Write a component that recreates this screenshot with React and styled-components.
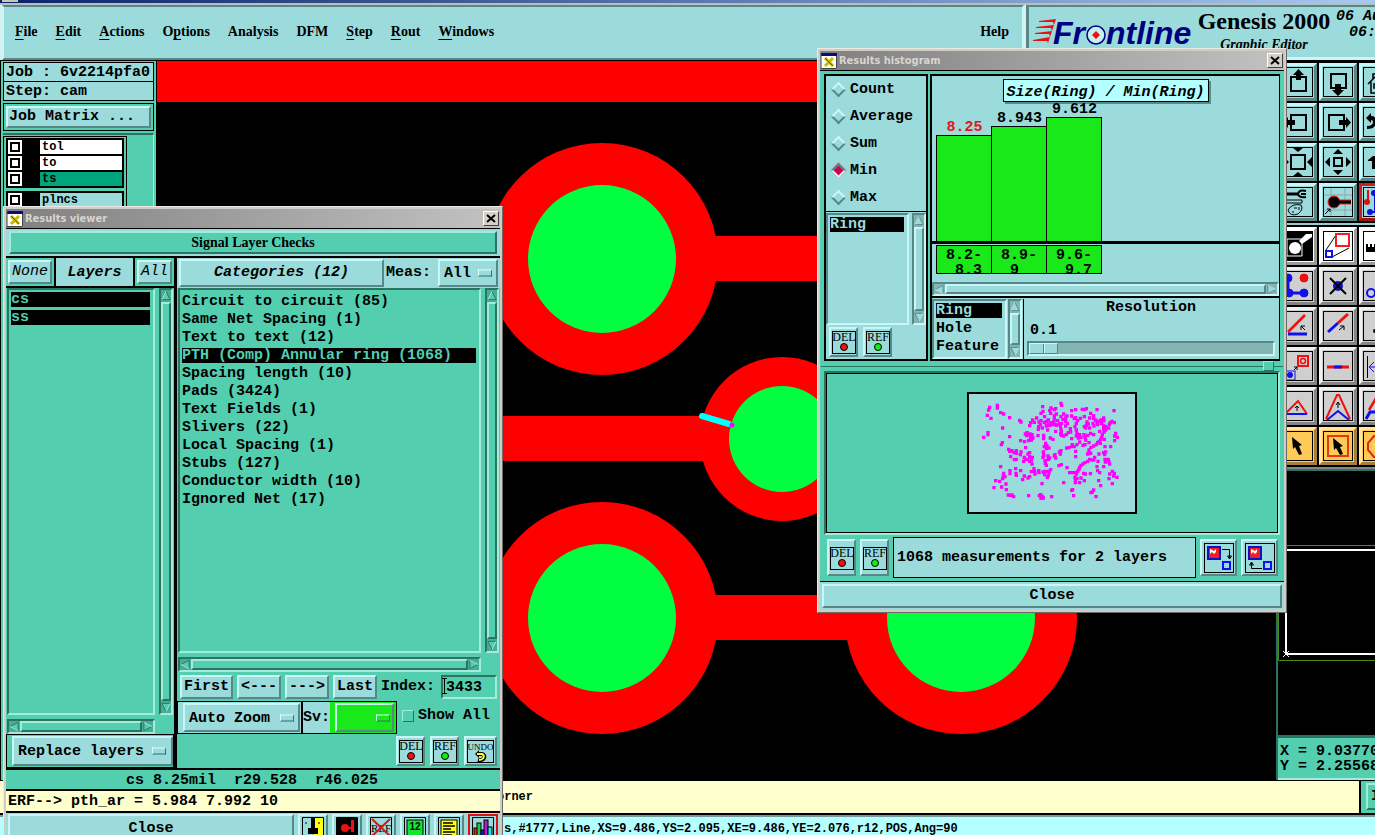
import React from 'react';
import styled, { createGlobalStyle, css } from 'styled-components';

const cyan = '#9bdbdb';
const cyanLight = '#c9f6f6';
const cyanDark = '#568888';
const teal = '#53cfb0';
const tealLight = '#a4ecda';
const tealDark = '#2b7462';
const green = '#19e819';
const cream = '#ffffce';

const mono = '"Liberation Mono", "Courier New", monospace';
const serif = '"Liberation Serif", "Times New Roman", serif';

const GlobalStyle = createGlobalStyle`
  * {
    box-sizing: border-box;
  }

  body {
    margin: 0;
    background: #000;
    color: #000;
    font: bold 15px/18px ${mono};
  }

  button, input, select {
    margin: 0;
    border-radius: 0;
    color: inherit;
    font: inherit;
  }

  svg {
    display: block;
  }
`;

// Motif style bevels
const cyanRaised = css`
  background: ${cyan};
  border: 2px solid;
  border-color: ${cyanLight} ${cyanDark} ${cyanDark} ${cyanLight};
`;

const tealRaised = css`
  background: ${teal};
  border: 2px solid;
  border-color: ${tealLight} ${tealDark} ${tealDark} ${tealLight};
`;

const sunken = css`
  border: 2px solid;
  border-color: ${(p) => (p.$cyan
    ? `${cyanDark} ${cyanLight} ${cyanLight} ${cyanDark}`
    : `${tealDark} ${tealLight} ${tealLight} ${tealDark}`)};
`;

/* ---------- application shell ---------- */

const Shell = styled.div`
  position: relative;
  display: flex;
  flex-direction: column;
  height: 100vh;
  overflow: hidden;
`;

const DesktopTitle = styled.div`
  flex: none;
  height: 5px;
  border-bottom: 2px solid #b9bfc0;
  background: linear-gradient(90deg, #0a246a, #a6caf0);

  &::before {
    content: '';
    display: block;
    width: 16px;
    height: 2px;
    margin-left: 2px;
    background: #c8c8b8;
  }
`;

const Header = styled.header`
  display: flex;
  flex: none;
  gap: 2px;
  height: 56px;
  padding-left: 2px;
  border-bottom: 1px solid #000;
  background: #d8f0f0;
`;

const MenuBar = styled.nav`
  display: flex;
  flex: 1;
  align-items: center;
  gap: 18px;
  padding: 0 13px 2px 11px;
  background: ${cyan};
  border: 2px solid;
  border-color: ${cyanDark} ${cyanLight} ${cyanDark} ${cyanLight};
`;

const MenuItem = styled.button`
  padding: 0;
  border: 0;
  background: none;
  font: bold 14px/18px ${serif};
  text-underline-offset: 3px;

  &:last-child {
    margin-left: auto;
  }
`;

const Brand = styled.div`
  display: flex;
  flex: none;
  gap: 4px;
  width: 349px;
  padding: 2px 0 0 3px;
  overflow: hidden;
  background: ${cyan};
  border-top: 2px solid ${cyanDark};
  border-left: 3px solid ${cyanDark};
  border-bottom: 3px solid ${cyanLight};
`;

const BrandTitle = styled.div`
  flex: none;
  width: 136px;
  font: bold 24px/24px ${serif};
  text-align: center;
  white-space: nowrap;

  small {
    display: block;
    font: italic bold 14px/24px ${serif};
  }
`;

const BrandDate = styled.div`
  font-style: italic;
  line-height: 16px;
  white-space: pre;
`;

const BrandTime = styled.div`
  padding-left: 13px;
`;

const Workspace = styled.div`
  display: grid;
  flex: 1;
  grid-template-columns: 156px minmax(0, 1fr) 99px;
  min-height: 0;
`;

const Sidebar = styled.aside`
  padding: 1px 2px 0 2px;
  border-left: 1px solid #000;
  background: ${teal};
`;

const JobLine = styled.div`
  height: 20px;
  margin-bottom: -1px;
  padding-left: 2px;
  border: 1px solid #000;
  background: ${cyan};
  line-height: 19px;
  white-space: pre;
`;

const MatrixFrame = styled.div`
  margin-top: 3px;
  padding: 2px;
  border: 1px solid #000;
`;

const MatrixButton = styled.button`
  ${cyanRaised}
  display: block;
  width: 100%;
  height: 22px;
  padding: 0 1px;
  line-height: 18px;
  text-align: left;
`;

const LayerArea = styled.div`
  display: flex;
  gap: 2px;
  margin-top: 2px;
  border-top: 2px solid ${tealDark};
  border-right: 1px solid ${tealLight};
`;

const LayerFrame = styled.div`
  display: flex;
  flex-direction: column;
  gap: 3px;
  width: 124px;
  margin-top: 1px;
  padding: 1px 2px;
  border: 1px solid #000;
  border-bottom: 0;
`;

const LayerGroup = styled.div`
  display: flex;
  flex-direction: column;
  gap: 2px;
  padding: 2px;
  background: #000;
`;

const LayerRow = styled.label`
  display: grid;
  grid-template-columns: 14px 1fr;
  gap: 18px;
  height: 14px;
  font-size: 12px;
  line-height: 14px;

  span {
    padding-left: 2px;
    background: ${(p) => p.$color};
  }

  input {
    appearance: none;
    width: 14px;
    height: 14px;
    border: 2px solid #fff;
    outline: 2px solid #000;
    outline-offset: -4px;
    background: #fff;
  }
`;

const Board = styled.svg`
  width: 100%;
  height: 100%;
`;

const RightPanel = styled.aside`
  display: flex;
  flex-direction: column;
  min-width: 0;
  overflow: hidden;
  border-left: 2px solid ${tealDark};
`;

const ToolGrid = styled.div`
  display: grid;
  flex: none;
  grid-template-columns: repeat(3, 38px);
  gap: 2px;
  padding: 2px 1px;
  background: #000;
  border-bottom: ${(p) => (p.$last ? '2px solid #8a8585' : '2px solid #9bcccc')};
`;

const toolTones = {
  cyan: [cyan, cyanLight, cyanDark],
  white: ['#fff', '#fff', '#9b9b9b'],
  gray: ['#cfcfcf', '#f0f0f0', '#858585'],
  orange: ['#ffca57', '#ffe6a8', '#a58035'],
  red: [cyan, '#cc2020', '#a01414'],
};

const Tool = styled.button`
  width: 38px;
  height: 38px;
  padding: 0;
  border: 3px solid;
  border-color: ${(p) => {
    const [, light, dark] = toolTones[p.$tone];
    return `${light} ${dark} ${dark} ${light}`;
  }};
  background: ${(p) => toolTones[p.$tone][0]};
`;

const Overview = styled.svg`
  flex: 1;
  width: 100%;
  min-height: 0;
  border-top: 2px solid ${tealDark};
`;

const Coordinates = styled.div`
  flex: none;
  height: 45px;
  padding: 6px 0 0 2px;
  border-top: 3px solid ${tealDark};
  border-bottom: 2px solid ${tealLight};
  background: ${teal};
  line-height: 15px;
  white-space: pre;
`;

const PromptRow = styled.div`
  display: flex;
  flex: none;
  gap: 2px;
  height: 35px;
  border-top: 1px solid #000;
  border-bottom: 2px solid #000;
  background: #000;
`;

const Prompt = styled.div`
  flex: 1;
  padding-left: 497px;
  background: ${cream};
  font-size: 12px;
  line-height: 32px;
`;

const PromptSide = styled.div`
  width: 14px;
  padding: 2px 0 2px 5px;
  overflow: hidden;
  background: ${teal};
`;

const PromptButton = styled.button`
  ${tealRaised}
  width: 30px;
  height: 27px;
  padding: 0 3px;
  text-align: left;
`;

const StatusRow = styled.div`
  flex: none;
  height: 20px;
  padding-left: 504px;
  border-top: 2px solid #789a9a;
  background: #b4ffff;
  font-size: 12px;
  line-height: 24px;
  overflow: hidden;
  white-space: nowrap;
`;

/* ---------- dialogs ---------- */

const Dialog = styled.section`
  position: absolute;
  display: flex;
  flex-direction: column;
  padding: 2px;
  border: 1px solid;
  border-color: #ece9e2 #6b6b6b #6b6b6b #ece9e2;
  background: #d0ccc6;
`;

const ViewerDialog = styled(Dialog)`
  top: 206px;
  bottom: -12px;
  left: 3px;
  width: 500px;
`;

const HistogramDialog = styled(Dialog)`
  top: 48px;
  left: 817px;
  width: 470px;
`;

const TitleBar = styled.header`
  display: flex;
  flex: none;
  align-items: center;
  gap: 2px;
  height: 19px;
  padding: 0 1px;
  background: linear-gradient(90deg, #808080, #c2c2c2);
  color: #d8d5ce;
  font: bold 11px/16px "DejaVu Sans Condensed", "DejaVu Sans", sans-serif;

  h2 {
    flex: 1;
    margin: 0;
    font: inherit;
  }
`;

const CloseBox = styled.button`
  width: 16px;
  height: 15px;
  padding: 2px;
  border: 1px solid;
  border-color: #fff #404040 #404040 #fff;
  background: #d4d0c8;
`;

const Body = styled.div`
  display: flex;
  flex: 1;
  flex-direction: column;
  min-height: 0;
  border: 1px solid #000;
  border-width: 1px 0 0;
  background: #000;
`;

const Banner = styled.div`
  flex: none;
  margin-bottom: 2px;
  padding: 2px 3px;
  background: ${cyan};

  h3 {
    ${tealRaised}
    height: 23px;
    margin: 0;
    font: bold 14px/19px ${serif};
    text-align: center;
  }
`;

const Columns = styled.div`
  display: grid;
  flex: 1;
  grid-template-columns: 168px minmax(0, 1fr);
  gap: 3px;
  min-height: 0;
`;

const Column = styled.div`
  display: flex;
  flex-direction: column;
  min-height: 0;
  background: ${teal};
`;

const ColumnHead = styled.div`
  display: flex;
  flex: none;
  gap: 2px;
  height: 30px;
  border-bottom: 2px solid #000;
  background: #000;
`;

const HeadCell = styled.div`
  padding: 2px;
  background: ${teal};
`;

const HeadLabel = styled.div`
  flex: 1;
  background: ${cyan};
  font-style: italic;
  line-height: 30px;
  text-align: center;
`;

const Button = styled.button`
  ${cyanRaised}
  height: ${(p) => p.$height || 24}px;
  width: ${(p) => (p.$wide ? '100%' : 'auto')};
  padding: 0 2px;
  font-style: ${(p) => (p.$italic ? 'italic' : 'normal')};
  font-weight: ${(p) => (p.$light ? 'normal' : 'bold')};
  line-height: 20px;
`;

const CategoryHead = styled.div`
  display: flex;
  flex: none;
  align-items: center;
  height: 30px;
  padding: 0 2px;
  background: ${cyan};

  label {
    padding: 0 7px 0 2px;
  }
`;

const CategoryButton = styled(Button)`
  flex: 1;
`;

const SelectWrap = styled.span`
  position: relative;
  display: block;

  &::after {
    content: '';
    position: absolute;
    top: 50%;
    right: 6px;
    width: 12px;
    height: 5px;
    border: 1px solid;
    border-color: #d9ffff #337070 #337070 #d9ffff;
    transform: translateY(-50%);
    pointer-events: none;
  }
`;

const Select = styled.select`
  ${cyanRaised}
  display: block;
  appearance: none;
  width: ${(p) => p.$width}px;
  height: ${(p) => p.$height}px;
  padding: 2px 4px 0;
  background: ${(p) => p.$color || cyan};
`;

const ListArea = styled.div`
  display: grid;
  flex: 1;
  grid-template-columns: minmax(0, 1fr) 14px;
  grid-template-rows: minmax(0, 1fr) 15px;
  gap: 4px;
  min-height: 0;
  padding: 0 1px;
`;

const List = styled.ul`
  ${sunken}
  display: flex;
  flex-direction: column;
  gap: 3px;
  margin: 0;
  padding: ${(p) => (p.$roomy ? 4 : 2)}px 3px 0 2px;
  overflow: hidden;
  list-style: none;
  background: ${(p) => (p.$cyan ? cyan : 'transparent')};
`;

const ListItem = styled.li`
  flex: none;
  height: 15px;
  background: ${(p) => (p.$selected ? '#000' : 'transparent')};
  color: ${(p) => (p.$selected ? (p.$cyan ? cyan : teal) : '#000')};
  line-height: 16px;
  white-space: nowrap;
`;

const ScrollTrack = styled.div`
  ${sunken}
  display: flex;
  flex-direction: ${(p) => (p.$horizontal ? 'row' : 'column')};
  gap: 1px;
  min-width: 0;
  min-height: 0;
  background: ${(p) => (p.$cyan ? '#84b5b5' : '#46ae94')};
`;

const ScrollThumb = styled.div`
  flex: 1;
  ${(p) => (p.$cyan ? cyanRaised : tealRaised)}
`;

const NavRow = styled.div`
  display: flex;
  flex: none;
  align-items: center;
  gap: 4px;
  padding: 3px 3px 2px;
`;

const IndexField = styled.div`
  position: relative;
  flex: 1;
  margin-left: 2px;

  svg {
    position: absolute;
    top: 3px;
    left: 1px;
  }
`;

const IndexInput = styled.input`
  ${sunken}
  display: block;
  width: 100%;
  height: 24px;
  padding: 0 3px;
  background: transparent;
`;

const ViewRow = styled.div`
  display: flex;
  flex: none;
  gap: 5px;
`;

const ViewFrame = styled.div`
  display: flex;
  align-items: center;
  height: 33px;
  border: 1px solid #000;
  background: ${cyan};
`;

const ZoomCell = styled.div`
  padding: 1px 1px 1px 5px;
  border-right: 2px solid #000;
`;

const SvCell = styled.div`
  display: flex;
  align-items: center;

  > span {
    padding: 1px 2px 1px 5px;
    background: ${green};
  }
`;

const ShowAll = styled.label`
  display: flex;
  align-items: center;
  gap: 4px;
  height: 30px;

  input {
    ${tealRaised}
    appearance: none;
    width: 12px;
    height: 12px;
    border-width: 1px;
  }
`;

const IconRow = styled.div`
  display: flex;
  flex: none;
  justify-content: ${(p) => (p.$left ? 'flex-start' : 'flex-end')};
  gap: 5px;
  padding: 2px 3px;
`;

const IconButton = styled.button`
  ${cyanRaised}
  display: flex;
  flex: none;
  align-items: center;
  justify-content: center;
  width: ${(p) => p.$width || 29}px;
  height: ${(p) => p.$height || 30}px;
  padding: 0;
`;

const ReplaceFrame = styled.div`
  flex: none;
  padding: 1px 1px 1px 5px;
  border: 1px solid #000;
`;

const Measure = styled.div`
  flex: none;
  height: 23px;
  border: 2px solid #000;
  border-width: 2px 0;
  padding-left: 120px;
  background: ${teal};
  line-height: 21px;
  white-space: pre;
`;

const Erf = styled.div`
  flex: none;
  height: 22px;
  padding-left: 2px;
  border-bottom: 2px solid #000;
  background: ${cream};
  line-height: 21px;
  white-space: pre;
`;

const ViewerFoot = styled.footer`
  display: flex;
  flex: none;
  gap: 4px;
  height: 31px;
  padding: 1px 2px;
  background: ${cyan};
`;

const FootClose = styled(Button)`
  flex: 1;
  height: 29px;
`;

const FootTool = styled.button`
  ${cyanRaised}
  width: 30px;
  height: 29px;
  padding: 0;
  border-color: ${(p) => (p.$active ? '#e01010' : undefined)};
`;

/* ---------- histogram dialog ---------- */

const HistogramBody = styled.div`
  border: 1px solid #000;
  border-width: 1px 0;
  padding: 3px 4px;
  background: ${teal};
`;

const HistogramTop = styled.div`
  display: grid;
  grid-template-columns: 104px minmax(0, 1fr);
  gap: 2px;
`;

const Pane = styled.div`
  display: flex;
  flex-direction: column;
  border: 2px solid #000;
  border-right-width: ${(p) => (p.$side ? 2 : 1)}px;
  background: ${cyan};
`;

const RadioGroup = styled.div`
  display: flex;
  flex-direction: column;
  padding-left: 7px;
  border-bottom: 1px solid #000;
`;

const Radio = styled.label`
  display: flex;
  align-items: center;
  gap: 6px;
  height: 27px;

  input {
    appearance: none;
    width: 11px;
    height: 11px;
    border: 2px solid;
    border-color: ${cyanLight} ${cyanDark} ${cyanDark} ${cyanLight};
    transform: rotate(45deg);
  }

  input:checked {
    border-color: ${cyanDark} ${cyanLight} ${cyanLight} ${cyanDark};
    background: #c8084c;
  }
`;

const SideLists = styled.div`
  display: grid;
  flex: 1;
  grid-template-columns: minmax(0, 1fr) 14px;
  gap: 3px;
  margin-top: 1px;
`;

const Chart = styled.div`
  position: relative;
  display: flex;
  align-items: flex-end;
  height: 168px;
  padding-left: 5px;
  border-bottom: 3px solid #000;
`;

const ChartTitle = styled.div`
  position: absolute;
  top: 3px;
  left: 50%;
  height: 23px;
  padding: 0 3px;
  border: 1px solid #000;
  background: #b4ffff;
  box-shadow: 2px 2px 0 #5c8a8a;
  font-style: italic;
  line-height: 25px;
  white-space: nowrap;
  transform: translateX(-50%);
`;

const BarColumn = styled.div`
  position: relative;
  width: 55px;
  color: ${(p) => (p.$hot ? '#e01818' : '#000')};
  line-height: 15px;
  text-align: center;
`;

const Bar = styled.div`
  border: 1px solid #000;
  border-width: 1px 1px 0 0;
  background: ${green};
  box-shadow: -1px 0 0 #000;
`;

const Ranges = styled.div`
  display: flex;
  padding: 1px 0 8px 5px;
`;

const Range = styled.div`
  width: 55px;
  height: 29px;
  padding: 2px 0 0 9px;
  border: 1px solid #000;
  border-left-width: 0;
  background: ${green};
  box-shadow: -1px 0 0 #000;
  line-height: 15px;
  white-space: pre;
`;

const HBar = styled.div`
  display: grid;
  height: 14px;
`;

const Settings = styled.div`
  display: grid;
  grid-template-columns: 75px 14px minmax(0, 1fr);
  gap: 1px;
  height: 63px;
  padding-top: 1px;
  border-top: 2px solid #000;
`;

const Resolution = styled.div`
  display: flex;
  flex-direction: column;
  padding: 0 4px 2px 3px;
  border-left: 1px solid #000;

  label {
    text-align: center;
  }

  output {
    padding: 5px 3px 1px;
  }
`;

const Slider = styled.input`
  ${sunken}
  appearance: none;
  width: 100%;
  height: 15px;
  background: #84b5b5;

  &::-webkit-slider-thumb {
    appearance: none;
    width: 29px;
    height: 11px;
    border: 1px solid;
    border-color: ${cyanLight} ${cyanDark} ${cyanDark} ${cyanLight};
    background: linear-gradient(90deg, transparent 13px, ${cyanDark} 13px 14px, ${cyanLight} 14px 15px, transparent 15px) ${cyan};
  }
`;

const Sash = styled.div`
  display: flex;
  align-items: center;
  justify-content: flex-end;
  height: 10px;
  margin: 0 -3px;
  padding-right: 9px;
  background: linear-gradient(${tealDark}, ${tealDark}) 0 5px / 100% 1px no-repeat;

  &::after {
    content: '';
    width: 9px;
    height: 8px;
    ${tealRaised}
    border-width: 1px;
  }
`;

const MapPane = styled.div`
  ${sunken}
  display: flex;
  justify-content: center;
  padding: 19px 0;
  outline: 1px solid #000;
  outline-offset: -3px;
`;

const MapBox = styled.div`
  width: 170px;
  height: 122px;
  border: 2px solid #000;
  background: ${cyan};
`;

const HistogramFoot = styled.div`
  display: flex;
  align-items: center;
  gap: 4px;
  padding: 2px 2px 0 3px;
`;

const Message = styled.div`
  flex: 1;
  padding-left: 3px;
  border: 1px solid #000;
  background: ${cyan};
  line-height: 39px;
`;

const CloseStrip = styled.div`
  padding: 2px;
  background: ${cyan};
`;

/* ---------- drawings ---------- */

const XIcon = () => (
  <svg width="16" height="16" viewBox="0 0 16 16">
    <rect width="16" height="16" fill="#fff" />
    <rect width="16" height="3" fill="#0a0a78" />
    <path d="M4 5 L12 13 M12 5 L4 13" stroke="#c8b800" strokeWidth="3" />
    <path d="M4 5 L12 13" stroke="#5c5c10" strokeWidth="1" />
    <path d="M0 0 V15.5 H15.5 V3" stroke="#444" fill="none" />
  </svg>
);

const CrossIcon = () => (
  <svg width="10" height="9" viewBox="0 0 10 9">
    <path d="M1 1 L9 8 M9 1 L1 8" stroke="#000" strokeWidth="2" />
  </svg>
);

const Arrow = ({ dir, light, dark }) => {
  const turn = { up: 0, right: 90, down: 180, left: 270 }[dir];
  return (
    <svg width="10" height="11" viewBox="0 0 11 11" style={{ flex: 'none' }}>
      <g transform={`rotate(${turn} 5.5 5.5)`}>
        <path d="M5.5 1 L10 10 H1 Z" fill={light} stroke={dark} />
        <path d="M5.5 1 L1 10" stroke="#c9f6f6" />
      </g>
    </svg>
  );
};

const Scrollbar = ({ horizontal, cyan: onCyan }) => {
  const fill = onCyan ? cyan : teal;
  const edge = onCyan ? cyanDark : tealDark;
  return (
    <ScrollTrack $horizontal={horizontal} $cyan={onCyan}>
      <Arrow dir={horizontal ? 'left' : 'up'} light={fill} dark={edge} />
      <ScrollThumb $cyan={onCyan} />
      <Arrow dir={horizontal ? 'right' : 'down'} light={fill} dark={edge} />
    </ScrollTrack>
  );
};

const FrontlineLogo = () => (
  <svg width="160" height="48" viewBox="0 0 160 48" style={{ flex: 'none' }}>
    <path
      fill="#ee1010"
      d="M7 12 L24 10 L22 16 L21 13 L7 13 Z M4 18 L22 16 L20 22 L19 19 L4 19 Z M3 24 L20 22 L18 28 L17 25 L3 25 Z M1 31 L18 28 L16 34 L15 32 L1 32 Z"
    />
    <g fill="#000080" fontFamily="Liberation Sans, Arial, sans-serif" fontSize="32" fontWeight="bold" fontStyle="italic">
      <text x="21" y="35">Fr</text>
      <text x="74" y="35">ntline</text>
    </g>
    <circle cx="64" cy="26" r="9" fill="#c8f0f0" stroke="#000080" strokeWidth="1.5" />
    <path d="M64 22 L68 26 L64 30 L60 26 Z" fill="#ee1010" />
  </svg>
);

const StampIcon = ({ text, size = 12, width = 24, children }) => (
  <svg width={width} height="24" viewBox={`0 0 ${width} 24`}>
    <rect x="0.5" y="1.5" width={width - 1} height="22" fill="none" stroke="#000" />
    <text x={width / 2} y="11" textAnchor="middle" fontFamily="Liberation Serif, serif" fontSize={size} fontWeight="normal">{text}</text>
    {children}
  </svg>
);

const DelIcon = () => (
  <StampIcon text="DEL">
    <circle cx="12" cy="17" r="3.5" fill="#f01010" stroke="#000" />
  </StampIcon>
);

const RefIcon = () => (
  <StampIcon text="REF">
    <circle cx="12" cy="17" r="3.5" fill="#10f010" stroke="#000" />
  </StampIcon>
);

const UndoIcon = () => (
  <StampIcon text="UNDO" size={9} width={27}>
    <path d="M12 15 H15 Q18 16 17 19 Q15 22 11 21" fill="none" stroke="#000" strokeWidth="4" />
    <path d="M8 15 L12 11 V19 Z" fill="#000" />
    <path d="M10 15 H15 Q17.500 16 16.500 19 Q15 21 12 21" fill="none" stroke="#ffff20" strokeWidth="2" />
  </StampIcon>
);

const CopyIcon = ({ back }) => (
  <svg width="30" height="30" viewBox="0 0 30 30">
    <rect x="0.5" y="0.5" width="29" height="29" fill="none" stroke="#000" />
    <rect x="4" y="4" width="12" height="12" fill="#f02020" stroke="#1010c8" strokeWidth="2" />
    <path d="M6 6 V11 L8 9 L10 11 L12 9 V6 L10 8 Z" fill="#fff" />
    <rect x="19" y="19" width="7" height="7" fill="#9bdbdb" stroke="#1010f0" strokeWidth="2" />
    <path
      d={back ? 'M17 25.500 H6.500 V20 M4.500 22 L6.500 19 L8.500 22 Z' : 'M18 6.500 H25.500 V15 M23.500 13 L25.500 16 L27.500 13 Z'}
      fill="none"
      stroke="#000"
    />
  </svg>
);

const toolDrawings = {
  panUp: <><rect x="9" y="11" width="15" height="14" fill="none" stroke="#000" strokeWidth="2" /><path d="M16.500 3 L22 9 H19 V14 H14 V9 H11 Z" /></>,
  panDown: <><rect x="9" y="8" width="15" height="14" fill="none" stroke="#000" strokeWidth="2" /><path d="M16 30 L22 24 H19 V18 H13 V24 H10 Z" /></>,
  home: <path d="M6 18 L16 8 L27 18 M9 16 V27 H26 M12 18 H16 V22 H12 Z M11 13 V8 H15" fill="none" stroke="#000" strokeWidth="1.500" />,
  panLeft: <><rect x="9" y="9" width="15" height="15" fill="none" stroke="#000" strokeWidth="2" /><path d="M1 16 L6 11 V14 H13 V19 H6 V22 Z" /></>,
  panRight: <><rect x="7" y="9" width="15" height="15" fill="none" stroke="#000" strokeWidth="2" /><path d="M29 16.500 L24 11 V14 H17 V19 H24 V22 Z" /></>,
  back: <path d="M4 12 L9 7 V10 Q15 10 14 17 Q13 23 5 23 V20 Q11 20 11 16 Q11 14 9 14 V17 Z" />,
  zoomIn: <><rect x="9" y="9" width="14" height="14" fill="none" stroke="#000" strokeWidth="2" /><path d="M11 2 H21 L16 6 Z M11 30 H21 L16 26 Z M30 11 V21 L25 16 Z M2 11 V21 L7 16 Z" /></>,
  zoomOut: <><rect x="12" y="12" width="8" height="8" fill="none" stroke="#000" strokeWidth="2" /><path d="M11 8 H21 L16 3 Z M11 24 H21 L16 29 Z M24 11 V21 L29 16 Z M8 11 V21 L3 16 Z" /></>,
  one: <path d="M6 14 L11 10 H13 V23 H10 V15 H6 Z" />,
  setup: (
    <g fill="none" stroke="#000">
      <path d="M1 8 H16" strokeWidth="3" />
      <path d="M24 5 Q17 3 16 8 Q17 12 24 11 M19 8 H24" strokeWidth="2" />
      <path d="M1 14 H20 V17 H1 M6 24 Q10 17 19 19 Q22 23 16 28 Q8 31 6 24 Z M12 22 H15 M10 26 H12 M17 21 V24" />
    </g>
  ),
  feature: (
    <>
      <path d="M9 1 V31 M23 1 V31 M1 9 H31 M1 24 H31" stroke="#88a9a9" />
      <path d="M13 16 H29" stroke="#f02020" strokeWidth="5" />
      <circle cx="12" cy="16" r="6" stroke="#f02020" />
      <path d="M13 16 H29" stroke="#000" strokeWidth="3" />
      <path d="M3 28 L8 23 M5 23 H8 V26" stroke="#000" fill="none" />
    </>
  ),
  net: <><path d="M6 4 V16" stroke="#e01010" strokeWidth="2" /><circle cx="5" cy="16" r="3" fill="#e01010" /><path d="M13 4 V26 H8" stroke="#1010e0" strokeWidth="2" fill="none" /><circle cx="12" cy="7" r="3" fill="#1010e0" /><circle cx="8" cy="26" r="3" fill="#1010e0" /></>,
  highlight: <><rect x="2" y="2" width="28" height="28" /><path d="M5 9 H20 V26 H5 Z" fill="none" stroke="#fff" /><path d="M17 11 L24 4 H30 V7 L20 14 Z" fill="#fff" /><circle cx="13" cy="18" r="6" fill="#fff" /></>,
  resize: <><path d="M4 20 L14 5 M10 27 L27 18" stroke="#000" /><rect x="14" y="4" width="13" height="12" fill="#fff" stroke="#f02020" strokeWidth="2" /><rect x="4" y="21" width="6" height="6" fill="#fff" stroke="#1010e8" strokeWidth="2" /></>,
  ruler: <path d="M4 22 V14 H6 V17 H8 V14 H10 V17 H12 V14 H14 V17 H18 V22 Z" />,
  nodes: <g fill="#1010e8" stroke="#1010e8"><path d="M6 8 V23 H22" strokeWidth="3" fill="none" /><circle cx="6" cy="8" r="4" /><circle cx="7" cy="23" r="4" /><circle cx="22" cy="23" r="4" /><circle cx="22" cy="8" r="4" fill="#f01010" stroke="#f01010" /></g>,
  remove: <><circle cx="16" cy="16" r="5" fill="#1010d8" /><path d="M8 8 L24 24 M24 8 L8 24" stroke="#000" strokeWidth="2" /></>,
  ringTool: <circle cx="9" cy="23" r="4" fill="none" stroke="#1010e8" strokeWidth="2" />,
  angle: <><path d="M6 22 L23 5" stroke="#f01010" strokeWidth="2.500" /><path d="M6 24 H25" stroke="#1010e8" strokeWidth="3" /><path d="M23 20 L19 16 M19 20 V16 H23" stroke="#000" fill="none" /></>,
  split: <><path d="M16 13 L26 4" stroke="#f01010" strokeWidth="3" /><path d="M6 22 L16 13" stroke="#1010e8" strokeWidth="3" /><path d="M17 20 L22 16 M18 16 H22 V20" stroke="#000" fill="none" /></>,
  dot: <circle cx="13" cy="21" r="2" />,
  moveTo: <><rect x="16" y="6" width="10" height="10" fill="none" stroke="#f01010" strokeWidth="2" /><circle cx="21" cy="11" r="2.500" fill="none" stroke="#f01010" strokeWidth="1.500" /><rect x="4" y="21" width="9" height="9" fill="none" stroke="#1010e8" /><circle cx="8" cy="25" r="3" fill="#1010e8" /><path d="M12 20 L15 17 M12 17 H15 V20" stroke="#000" fill="none" /></>,
  segment: <><path d="M5 17 H27" stroke="#f01010" strokeWidth="3" /><path d="M12 17 H20" stroke="#1010e8" strokeWidth="3" /></>,
  measure: <><path d="M5.500 6 V28" stroke="#000" /><path d="M7 17 H18 M12 12 L7 17 L12 22 M14 12 V22" stroke="#1010e8" fill="none" /></>,
  triangle: <><path d="M4 23 L16 11 L25 24" stroke="#f01010" strokeWidth="2" fill="none" /><path d="M4 24 H25" stroke="#1010e8" strokeWidth="2" /><path d="M15 21 V16 M13 18 L15 16 L17 18" stroke="#000" fill="none" /></>,
  peak: <><path d="M4 29 L15 5 L17 5 L28 29" stroke="#f01010" strokeWidth="2" fill="none" /><path d="M5 30 L16 21 L27 30" stroke="#1010e8" strokeWidth="2" fill="none" /><path d="M16 18 V13 M14 15 L16 12 L18 15" stroke="#000" fill="none" /></>,
  slope: <><path d="M7 20 L16 5" stroke="#f01010" strokeWidth="2.500" /><path d="M4 29 L8 22 H20" stroke="#1010e8" strokeWidth="3" fill="none" /></>,
  pick: <path d="M10 7 L11 19 L13 17 L17 25 L20 24 L17 16 L20 15 Z" />,
  pickBox: <><rect x="6" y="6" width="20" height="20" fill="none" stroke="#e83810" strokeWidth="2" /><path d="M11 8 L12 20 L14 18 L18 25 L21 24 L18 17 L21 16 Z" /></>,
  pickPoly: <><path d="M18 6 H12 L6 13 V20 L12 27 H20" fill="none" stroke="#e82010" strokeWidth="2" /><path d="M13 9 L14 19 L19 16 Z" /></>,
};

const topTools = ['panUp', 'panDown', 'home', 'panLeft', 'panRight', 'back', 'zoomIn', 'zoomOut', 'one', 'setup', 'feature', 'net'];
const editTools = [
  ['highlight', 'white'], ['resize', 'white'], ['ruler', 'white'],
  ['nodes', 'gray'], ['remove', 'gray'], ['ringTool', 'gray'],
  ['angle', 'gray'], ['split', 'gray'], ['dot', 'gray'],
  ['moveTo', 'gray'], ['segment', 'gray'], ['measure', 'gray'],
  ['triangle', 'gray'], ['peak', 'gray'], ['slope', 'gray'],
  ['pick', 'orange'], ['pickBox', 'orange'], ['pickPoly', 'orange'],
];

const ToolButton = ({ name, tone }) => (
  <Tool $tone={tone} aria-label={name}>
    <svg width="32" height="32" viewBox="0 0 32 32">
      {toolDrawings[name]}
      <rect x="1.500" y="1.500" width="29" height="29" fill="none" stroke="#000" />
    </svg>
  </Tool>
);

const footDrawings = {
  split: <><rect x="3" y="2" width="11" height="23" fill="#9bdbdb" /><rect x="14" y="2" width="9" height="23" fill="#ffff10" /><path d="M11 2 H15 V12 H18 V18 H8 V12 H11 Z" /><path d="M6 6 V8 M19 6 V8" stroke="#000" /></>,
  record: <><rect x="3" y="2" width="20" height="23" /><circle cx="11" cy="12" r="4" fill="#f01010" /><rect x="17" y="4" width="3" height="12" fill="#f01010" /><rect x="11" y="11" width="7" height="2" fill="#f01010" /></>,
  noRef: <><text x="13" y="16" textAnchor="middle" fontFamily="Liberation Serif, serif" fontSize="11" fontWeight="normal">REF</text><path d="M4 3 L22 20 M22 3 L4 20" stroke="#d01818" strokeWidth="2" /></>,
  half: <><rect x="5" y="4" width="16" height="20" fill="#10e830" stroke="#000" /><text x="13" y="14" textAnchor="middle" fontFamily="Liberation Sans, sans-serif" fontSize="10">12</text></>,
  notes: <><rect x="5" y="4" width="16" height="20" fill="#ffff10" stroke="#000" /><path d="M7 7 H17 M7 10 H19 M7 13 H15 M7 16 H19 M7 19 H16" stroke="#000" strokeWidth="1.500" /></>,
  bars: <g stroke="#000"><rect x="4" y="12" width="4" height="14" fill="#f02020" /><rect x="7" y="7" width="4" height="19" fill="#20c840" /><rect x="11" y="14" width="4" height="12" fill="#2020e0" /><rect x="14" y="4" width="4" height="22" fill="#b020c8" /><rect x="18" y="11" width="4" height="15" fill="#20e0f0" /></g>,
};

// Measurement locations, x and y on a 504 x 360 board
const points = `88 66 85 74 111 60 111 68 81 90 92 99 121 82 130 86 148 97 178 105 182 110 127 128
  70 156 83 142 83 148 148 154 181 166 126 172 123 178 193 169 196 187 145 192 148 198 155 196 161 202
  151 214 168 196 168 204 162 223 168 222 182 200 180 208 192 216 190 228 195 222 203 206 208 202 202 222
  208 214 213 224 208 228 215 236 216 216 121 244 166 250 149 256 149 265 167 264 168 270 181 256 130 264
  129 272 127 280 134 274 118 288 106 286 101 307 124 305 137 296 138 313 144 329 150 330 155 329 160 334
  187 283 192 272 203 278 208 274 205 331 213 259 221 250 223 258 224 266 235 256 236 262 245 295 237 331
  241 328 242 339 246 333 249 338 248 260 254 258 253 268 263 258 264 270 261 276 274 334 266 262 271 253
  247 64 242 84 248 78 253 94 229 98 217 104 222 111 211 112 208 121 236 110 242 106 240 118 235 124
  234 132 246 128 252 112 258 108 264 104 264 116 258 122 268 120 272 112 271 84 268 76 272 68 282 73
  286 70 282 92 288 86 282 100 281 110 286 118 278 118 292 106 288 120 297 116 302 54 304 60 310 86
  302 94 308 102 316 98 320 92 316 108 321 114 316 122 303 114 300 122 302 132 303 140 301 146 304 150
  262 134 250 150 250 160 233 151 215 148 209 146 200 142 218 158 210 156 205 166 213 164 199 151 195 146
  270 158 278 162 286 138 310 152 318 148 324 142 334 160 330 130 331 140 344 124 348 114 352 106 342 100
  334 92 334 76 346 73 346 97 360 99 366 72 373 73 378 70 372 94 391 84 410 73 461 76 400 91 400 100
  388 98 380 110 378 120 372 124 384 116 376 128 388 128 398 114 401 122 406 104 410 112 415 108 412 118
  422 104 430 98 431 106 424 114 430 120 436 124 441 128 430 130 436 134 450 112 455 108 462 112 447 117
  445 128 418 138 348 134 350 144 348 152 354 158 358 148 362 156 371 148 374 156 376 164 382 150 391 144
  400 148 358 170 350 178 342 184 334 184 326 187 319 188 336 178 368 180 374 178 386 172 392 186 400 182
  408 178 412 172 416 168 421 162 424 156 420 174 426 148 431 140 432 162 434 184 451 184 466 144 463 152
  471 156 463 166 386 194 386 202 382 206 391 204 346 198 346 214 416 206 430 202 436 200 433 208 403 216
  400 224 388 222 382 228 374 232 368 236 362 240 358 246 356 252 352 258 344 262 336 262 328 262 348 266
  344 276 345 284 345 292 350 280 358 292 372 286 362 278 370 264 375 266 390 265 412 256 418 262 396 224
  413 228 410 244 430 244 435 230 434 222 444 222 446 230 448 236 415 286 421 301 456 295 446 280 448 266
  456 258 462 264 460 272 470 276 407 334 400 314 396 320 392 322 340 331 334 315 337 313 310 292 320 247
  303 238 296 241 284 208 286 218 282 212 268 218 263 212 264 222 302 196 300 206 297 200 249 200 250 210
  248 216 254 226 255 234 258 240 256 174 260 182 258 190 266 188 252 184`.trim().split(/\s+/).map(Number);

const dots = [];
for (let i = 0; i + 1 < points.length; i += 2) {
  dots.push(`M${points[i] - 4} ${points[i + 1] - 4}h10v10h-10z`);
}

const menus = [['F', 'ile'], ['E', 'dit'], ['A', 'ctions'], ['O', 'ptions', 1], ['', 'Analysis'], ['', 'DFM'], ['S', 'tep'], ['R', 'out'], ['W', 'indows'], ['', 'Help']];

const categories = [
  'Circuit to circuit (85)', 'Same Net Spacing (1)', 'Text to text (12)', 'PTH (Comp) Annular ring (1068)',
  'Spacing length (10)', 'Pads (3424)', 'Text Fields (1)', 'Slivers (22)', 'Local Spacing (1)',
  'Stubs (127)', 'Conductor width (10)', 'Ignored Net (17)',
];

const bars = [
  { value: '8.25', range: '8.2-\n 8.3', height: 106, hot: true },
  { value: '8.943', range: '8.9-\n 9', height: 115 },
  { value: '9.612', range: '9.6-\n 9.7', height: 124 },
];

const pads = [[602, 259, 116, 74], [782, 439, 82, 53], [602, 618, 116, 74], [961, 618, 116, 74]];

const BoardView = () => (
  <Board>
    <g transform="translate(-156 -61)">
      <g fill="#f00">
        <rect x="157" y="61" width="1120" height="41" />
        <rect x="602" y="236" width="240" height="45" />
        <rect x="480" y="416" width="302" height="45" />
        <rect x="602" y="595" width="359" height="45" />
        {pads.map(([x, y, r]) => <circle key={`${x}-${y}`} cx={x} cy={y} r={r} />)}
      </g>
      {pads.map(([x, y, , r]) => <circle key={`${x}-${y}`} cx={x} cy={y} r={r} fill="#00ff40" />)}
      <path d="M702 416 L729 424" stroke="#00ffff" strokeWidth="6" strokeLinecap="round" />
      <circle cx="732" cy="425" r="2.500" fill="#ff00ff" />
    </g>
  </Board>
);

const ResultsViewer = () => (
  <ViewerDialog aria-label="Results viewer">
    <TitleBar>
      <XIcon />
      <h2>Results viewer</h2>
      <CloseBox aria-label="Close window"><CrossIcon /></CloseBox>
    </TitleBar>
    <Body>
      <Banner><h3>Signal Layer Checks</h3></Banner>
      <Columns>
        <Column>
          <ColumnHead>
            <HeadCell><Button $italic $light>None</Button></HeadCell>
            <HeadLabel>Layers</HeadLabel>
            <HeadCell><Button $italic $light>All</Button></HeadCell>
          </ColumnHead>
          <ListArea>
            <List>
              <ListItem $selected>cs</ListItem>
              <ListItem $selected>ss</ListItem>
            </List>
            <Scrollbar />
            <Scrollbar horizontal />
          </ListArea>
          <ReplaceFrame>
            <SelectWrap>
              <Select $width={161} $height={30} aria-label="Layer mode"><option>Replace layers</option></Select>
            </SelectWrap>
          </ReplaceFrame>
        </Column>
        <Column>
          <CategoryHead>
            <CategoryButton $italic $height={28}>Categories (12)</CategoryButton>
            <label htmlFor="meas">Meas:</label>
            <SelectWrap>
              <Select id="meas" $width={60} $height={28}><option>All</option></Select>
            </SelectWrap>
          </CategoryHead>
          <ListArea>
            <List $roomy>
              {categories.map((name) => (
                <ListItem key={name} $selected={name.startsWith('PTH')}>{name}</ListItem>
              ))}
            </List>
            <Scrollbar />
            <Scrollbar horizontal />
          </ListArea>
          <NavRow>
            <Button>First</Button>
            <Button>&lt;---</Button>
            <Button>---&gt;</Button>
            <Button>Last</Button>
            <label htmlFor="index">Index:</label>
            <IndexField>
              <IndexInput id="index" defaultValue="3433" />
              <svg width="5" height="16" viewBox="0 0 5 16"><path d="M0 0.500 H5 M0 15.500 H5 M2.500 0 V16" stroke="#000" /></svg>
            </IndexField>
          </NavRow>
          <ViewRow>
            <ViewFrame>
              <ZoomCell>
                <SelectWrap>
                  <Select $width={117} $height={29} aria-label="Zoom"><option>Auto Zoom</option></Select>
                </SelectWrap>
              </ZoomCell>
              <SvCell>
                <label htmlFor="severity">Sv:</label>
                <SelectWrap>
                  <Select id="severity" $width={59} $height={29} $color={green}><option aria-label="Green" /></Select>
                </SelectWrap>
              </SvCell>
            </ViewFrame>
            <ShowAll><input type="checkbox" />Show All</ShowAll>
          </ViewRow>
          <IconRow>
            <IconButton aria-label="Delete"><DelIcon /></IconButton>
            <IconButton aria-label="Reference"><RefIcon /></IconButton>
            <IconButton aria-label="Undo" $width={33}><UndoIcon /></IconButton>
          </IconRow>
        </Column>
      </Columns>
      <Measure>{'cs 8.25mil  r29.528  r46.025'}</Measure>
      <Erf>{'ERF--> pth_ar = 5.984 7.992 10'}</Erf>
      <ViewerFoot>
        <FootClose>Close</FootClose>
        {Object.entries(footDrawings).map(([name, drawing]) => (
          <FootTool key={name} $active={name === 'bars'} aria-label={name}>
            <svg width="26" height="25" viewBox="0 0 26 25">
              {drawing}
              <path d="M2.500 25 V1.500 H23.500 V25" fill="none" stroke="#000" />
            </svg>
          </FootTool>
        ))}
      </ViewerFoot>
    </Body>
  </ViewerDialog>
);

const ResultsHistogram = () => (
  <HistogramDialog aria-label="Results histogram">
    <TitleBar>
      <XIcon />
      <h2>Results histogram</h2>
      <CloseBox aria-label="Close window"><CrossIcon /></CloseBox>
    </TitleBar>
    <HistogramBody>
      <HistogramTop>
        <Pane $side>
          <RadioGroup>
            {['Count', 'Average', 'Sum', 'Min', 'Max'].map((name) => (
              <Radio key={name}>
                <input type="radio" name="stat" defaultChecked={name === 'Min'} />
                {name}
              </Radio>
            ))}
          </RadioGroup>
          <SideLists>
            <List $cyan><ListItem $selected $cyan>Ring</ListItem></List>
            <Scrollbar cyan />
          </SideLists>
          <IconRow $left>
            <IconButton aria-label="Delete"><DelIcon /></IconButton>
            <IconButton aria-label="Reference"><RefIcon /></IconButton>
          </IconRow>
        </Pane>
        <Pane>
          <Chart>
            <ChartTitle>Size(Ring) / Min(Ring)</ChartTitle>
            {bars.map((bar) => (
              <BarColumn key={bar.value} $hot={bar.hot}>
                {bar.value}
                <Bar style={{ height: bar.height }} />
              </BarColumn>
            ))}
          </Chart>
          <Ranges>
            {bars.map((bar) => <Range key={bar.value}>{bar.range}</Range>)}
          </Ranges>
          <HBar><Scrollbar horizontal cyan /></HBar>
          <Settings>
            <List $cyan>
              <ListItem $selected $cyan>Ring</ListItem>
              <ListItem>Hole</ListItem>
              <ListItem>Feature</ListItem>
            </List>
            <Scrollbar cyan />
            <Resolution>
              <label htmlFor="resolution">Resolution</label>
              <output htmlFor="resolution">0.1</output>
              <Slider id="resolution" $cyan type="range" min="0.1" max="10" step="0.1" defaultValue="0.1" />
            </Resolution>
          </Settings>
        </Pane>
      </HistogramTop>
      <Sash />
      <MapPane>
        <MapBox>
          <svg width="166" height="118" viewBox="27 27 498 354">
            <path d={dots.join('')} fill="#ff00ff" />
          </svg>
        </MapBox>
      </MapPane>
      <HistogramFoot>
        <IconButton aria-label="Delete" $height={37}><DelIcon /></IconButton>
        <IconButton aria-label="Reference" $height={37}><RefIcon /></IconButton>
        <Message>1068 measurements for 2 layers</Message>
        <IconButton aria-label="Copy to" $width={37} $height={37}><CopyIcon /></IconButton>
        <IconButton aria-label="Copy from" $width={37} $height={37}><CopyIcon back /></IconButton>
      </HistogramFoot>
    </HistogramBody>
    <CloseStrip><Button $wide $height={24}>Close</Button></CloseStrip>
  </HistogramDialog>
);

const App = () => (
  <>
    <GlobalStyle />
    <Shell>
      <DesktopTitle />
      <Header>
        <MenuBar>
          {menus.map(([key, rest, second]) => (
            <MenuItem key={rest}>
              {second ? <>O<u>p</u>tions</> : <><u>{key}</u>{rest}</>}
            </MenuItem>
          ))}
        </MenuBar>
        <Brand>
          <FrontlineLogo />
          <BrandTitle>
            Genesis 2000
            <small>Graphic Editor</small>
          </BrandTitle>
          <BrandDate>
            <div>06 Au</div>
            <BrandTime>06:</BrandTime>
          </BrandDate>
        </Brand>
      </Header>
      <Workspace>
        <Sidebar>
          <JobLine>Job : 6v2214pfa0</JobLine>
          <JobLine>Step: cam</JobLine>
          <MatrixFrame><MatrixButton>Job Matrix ...</MatrixButton></MatrixFrame>
          <LayerArea>
            <LayerFrame>
              <LayerGroup>
                <LayerRow $color="#fff"><input type="checkbox" /><span>tol</span></LayerRow>
                <LayerRow $color="#fff"><input type="checkbox" /><span>to</span></LayerRow>
                <LayerRow $color="#00a57e"><input type="checkbox" /><span>ts</span></LayerRow>
              </LayerGroup>
              <LayerGroup>
                <LayerRow $color={cyan}><input type="checkbox" /><span>plncs</span></LayerRow>
              </LayerGroup>
            </LayerFrame>
          </LayerArea>
        </Sidebar>
        <BoardView />
        <RightPanel>
          <ToolGrid>
            {topTools.map((name) => <ToolButton key={name} name={name} tone={name === 'net' ? 'red' : 'cyan'} />)}
          </ToolGrid>
          <ToolGrid $last>
            {editTools.map(([name, tone]) => <ToolButton key={name} name={name} tone={tone} />)}
          </ToolGrid>
          <Overview>
            <path d="M0.500 74.500 H100 M0.500 74 V189.500 H100" fill="none" stroke="#4c8a20" />
            <path d="M8 79 H100 M8 79 V183 H100" fill="none" stroke="#fff" strokeWidth="2" />
            <path d="M5 180 L11 186 M11 180 L5 186" stroke="#fff" />
          </Overview>
          <Coordinates>{'X = 9.03770\nY = 2.25568'}</Coordinates>
        </RightPanel>
      </Workspace>
      <PromptRow>
        <Prompt>orner</Prompt>
        <PromptSide><PromptButton>I</PromptButton></PromptSide>
      </PromptRow>
      <StatusRow>s,#1777,Line,XS=9.486,YS=2.095,XE=9.486,YE=2.076,r12,POS,Ang=90</StatusRow>
      <ResultsViewer />
      <ResultsHistogram />
    </Shell>
  </>
);

export default App;
